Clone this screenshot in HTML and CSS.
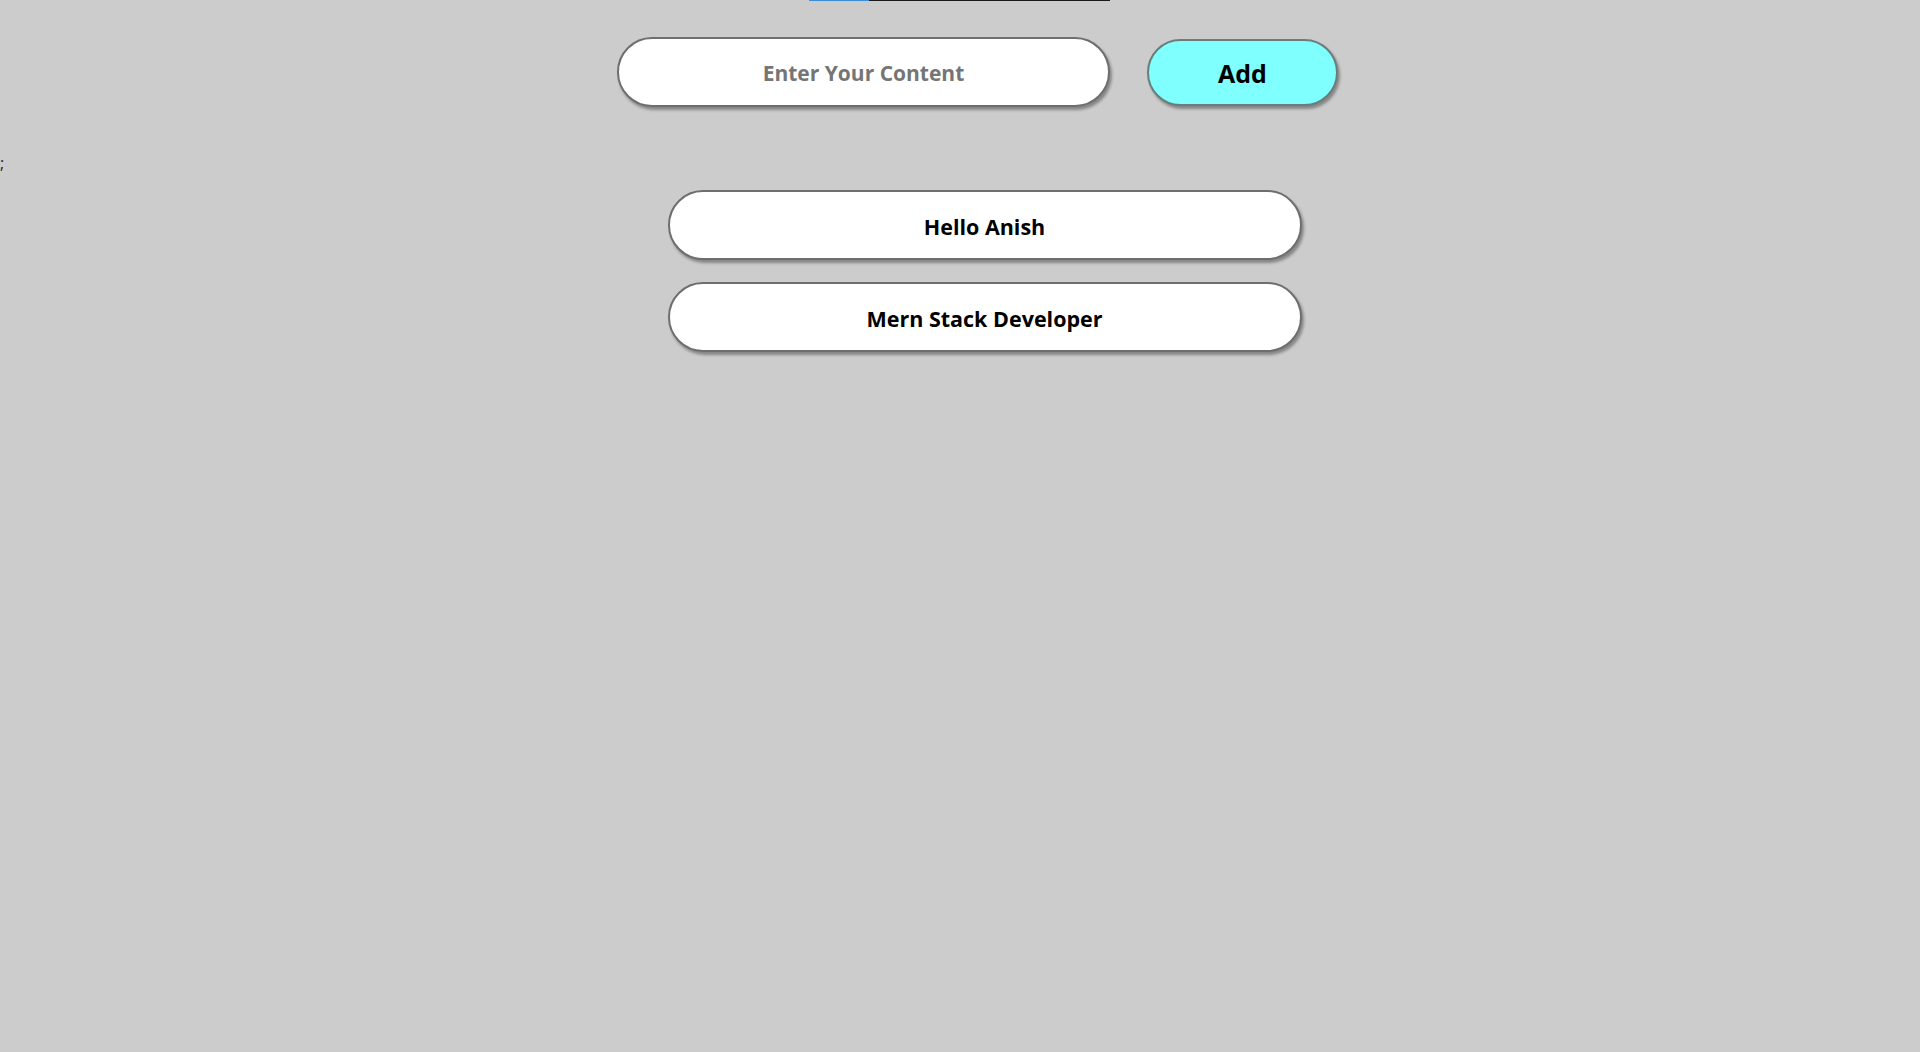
FILE: index.html
```html
<!DOCTYPE html>
<html lang="en">
<head>
<meta charset="utf-8">
<title>Todo</title>
<link rel="stylesheet" href="styles.css">
</head>
<body>
  <div class="topline"><span class="blue"></span><span class="black"></span></div>
  <div class="form">
    <input class="field" type="text" placeholder="Enter Your Content">
    <button class="add">Add</button>
  </div>
  <div class="stray">;</div>
  <ul class="list">
    <li class="item">Hello Anish</li>
    <li class="item">Mern Stack Developer</li>
  </ul>
</body>
</html>
```
FILE: styles.css
```css
html, body {
  margin: 0;
  padding: 0;
  background: #cccccc;
  font-family: "Open Sans", "Noto Sans", sans-serif;
  height: 100%;
}
.topline {
  display: flex;
  margin-left: 809px;
  width: 301px;
  height: 1px;
}
.topline .blue { width: 60px; background: #3b8ddb; }
.topline .black { flex: 1; background: #1a1a1a; }
.form {
  display: flex;
  justify-content: center;
  align-items: center;
  gap: 37px;
  padding-left: 35px;
  margin-top: 36px;
}
.field {
  box-sizing: border-box;
  width: 493px;
  height: 70px;
  border: 2px solid #6e6e6e;
  border-radius: 35px;
  background: #fff;
  box-shadow: 2px 3px 3px rgba(0,0,0,0.35);
  font-family: "Open Sans", sans-serif;
  font-weight: 700;
  font-size: 21px;
  text-align: center;
  outline: none;
  padding: 2px 0 0 0;
}
.field::placeholder { color: #757575; }
.add {
  box-sizing: border-box;
  width: 191px;
  height: 67px;
  border: 2px solid #6a7d7d;
  border-radius: 34px;
  background: #80ffff;
  box-shadow: 2px 3px 3px rgba(0,0,0,0.35);
  font-family: "Open Sans", sans-serif;
  font-weight: 700;
  font-size: 25px;
  color: #000;
  padding: 2px 0 0 0;
}
.stray {
  margin-top: 45px;
  height: 22px;
  font-size: 16px;
  line-height: 22px;
  color: #222;
  font-family: "Open Sans", sans-serif;
}
.list {
  list-style: none;
  margin: 16px 0 0 0;
  padding: 0 0 0 49px;
  display: flex;
  flex-direction: column;
  align-items: center;
  gap: 22px;
}
.item {
  box-sizing: border-box;
  width: 634px;
  height: 70px;
  padding-top: 2px;
  border: 2px solid #6e6e6e;
  border-radius: 35px;
  background: #fff;
  box-shadow: 2px 3px 3px rgba(0,0,0,0.35);
  display: flex;
  align-items: center;
  justify-content: center;
  font-weight: 700;
  font-size: 21.5px;
  color: #000;
}
```
